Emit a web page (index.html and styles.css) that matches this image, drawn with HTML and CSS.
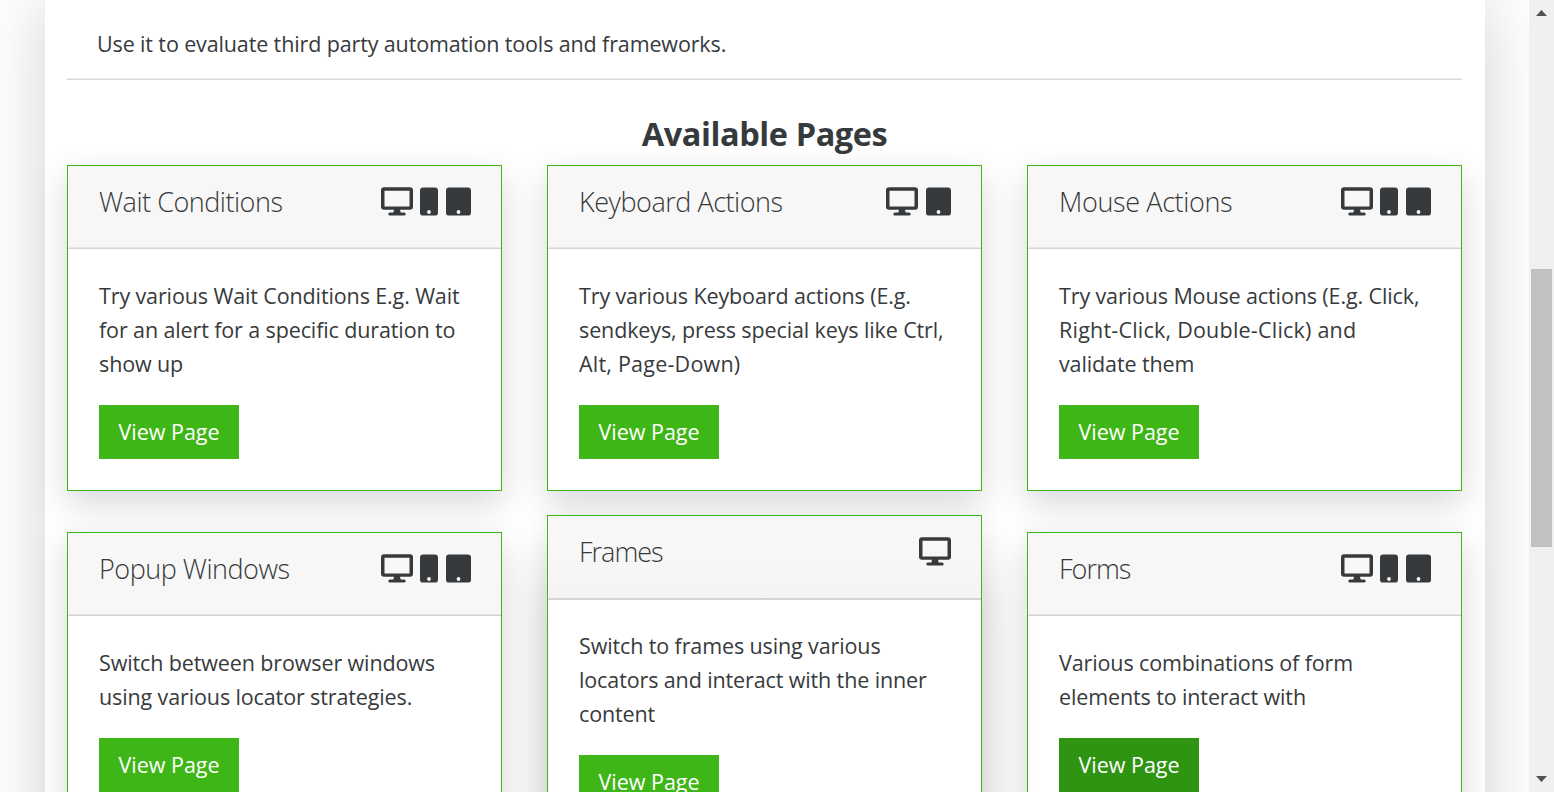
FILE: index.html
```
<!DOCTYPE html>
<html lang="en">
<head>
<meta charset="utf-8">
<title>Available Pages</title>
<link rel="stylesheet" href="styles.css">
</head>
<body>
<svg class="defs" width="0" height="0" aria-hidden="true">
  <symbol id="desktop" viewBox="0 0 32 29"><path fill-rule="evenodd" d="M3 .3H29Q32 .3 32 3.3V19.8Q32 22.8 29 22.8H19L19.7 25.6H23.1Q24.7 25.6 24.7 27.1T23.1 28.6H8.9Q7.3 28.6 7.3 27.1T8.9 25.6H12.3L13 22.8H3Q0 22.8 0 19.8V3.3Q0 .3 3 .3ZM3.5 3.8V19.4H28.5V3.8Z"/></symbol>
  <symbol id="mobile" viewBox="0 0 18 29"><path fill-rule="evenodd" d="M3.2 .4H14.8Q18 .4 18 3.6V25.4Q18 28.6 14.8 28.6H3.2Q0 28.6 0 25.4V3.6Q0 .4 3.2 .4ZM9 23.1A1.9 1.9 0 1 0 9 26.9A1.9 1.9 0 1 0 9 23.1Z"/></symbol>
  <symbol id="tablet" viewBox="0 0 25 29"><path fill-rule="evenodd" d="M3.2 .4H21.8Q25 .4 25 3.6V25.4Q25 28.6 21.8 28.6H3.2Q0 28.6 0 25.4V3.6Q0 .4 3.2 .4ZM12.5 23.1A1.9 1.9 0 1 0 12.5 26.9A1.9 1.9 0 1 0 12.5 23.1Z"/></symbol>
</svg>
<div class="viewport">
  <div class="scroll-area">
    <main class="page">
      <p class="intro">Use it to evaluate third party automation tools and frameworks.</p>
      <h2 class="heading">Available Pages</h2>
      <div class="cards">
        <article class="card">
          <header class="card-header"><h3>Wait Conditions</h3><span class="icons"><svg class="desktop"><use href="#desktop"/></svg><svg class="mobile"><use href="#mobile"/></svg><svg class="tablet"><use href="#tablet"/></svg></span></header>
          <div class="card-body"><p>Try various Wait Conditions E.g. Wait<br>for an alert for a specific duration to<br>show up</p><a class="button">View Page</a></div>
        </article>
        <article class="card">
          <header class="card-header"><h3>Keyboard Actions</h3><span class="icons"><svg class="desktop"><use href="#desktop"/></svg><svg class="tablet"><use href="#tablet"/></svg></span></header>
          <div class="card-body"><p>Try various Keyboard actions (E.g.<br>sendkeys, press special keys like Ctrl,<br><span class="loose">Alt, Page-Down)</span></p><a class="button">View Page</a></div>
        </article>
        <article class="card">
          <header class="card-header"><h3 class="t-mouse">Mouse Actions</h3><span class="icons"><svg class="desktop"><use href="#desktop"/></svg><svg class="mobile"><use href="#mobile"/></svg><svg class="tablet"><use href="#tablet"/></svg></span></header>
          <div class="card-body"><p>Try various Mouse actions (E.g. Click,<br><span class="loose">Right-Click, Double-Click) and</span><br>validate them</p><a class="button">View Page</a></div>
        </article>
        <article class="card">
          <header class="card-header"><h3>Popup Windows</h3><span class="icons"><svg class="desktop"><use href="#desktop"/></svg><svg class="mobile"><use href="#mobile"/></svg><svg class="tablet"><use href="#tablet"/></svg></span></header>
          <div class="card-body"><p>Switch between browser windows<br>using various locator strategies.</p><a class="button">View Page</a></div>
        </article>
        <article class="card raised">
          <header class="card-header"><h3 class="tight">Frames</h3><span class="icons"><svg class="desktop"><use href="#desktop"/></svg></span></header>
          <div class="card-body"><p>Switch to frames using various<br>locators and interact with the inner<br>content</p><a class="button">View Page</a></div>
        </article>
        <article class="card">
          <header class="card-header"><h3 class="tight">Forms</h3><span class="icons"><svg class="desktop"><use href="#desktop"/></svg><svg class="mobile"><use href="#mobile"/></svg><svg class="tablet"><use href="#tablet"/></svg></span></header>
          <div class="card-body"><p>Various combinations of form<br>elements to interact with</p><a class="button active">View Page</a></div>
        </article>
      </div>
    </main>
  </div>
  <div class="scrollbar">
    <svg class="arrow" viewBox="0 0 11 6"><path d="M5.5 0L11 6H0Z"/></svg>
    <div class="thumb"></div>
    <svg class="arrow" viewBox="0 0 11 6"><path d="M0 0H11L5.5 6Z"/></svg>
  </div>
</div>
</body>
</html>
```
FILE: styles.css
```
* { box-sizing: border-box; }
body { margin: 0; overflow: hidden; background: #fff; color: #373a3c; font: 21.5px/33.75px "Segoe UI", "Open Sans", "Noto Sans", sans-serif; }
h2, h3, p { margin: 0; white-space: nowrap; }
.defs { display: none; }
.viewport { display: flex; height: 792px; overflow: hidden; }
.scroll-area { width: 1529px; padding: 0 44px 0 45px; overflow: hidden; }
.page { height: 1000px; padding: 0 23px 0 22px; background: #fff; box-shadow: 0 0 67px rgba(0,0,0,.18); }
.intro { height: 80px; padding: 27px 30px 0; letter-spacing: -.13px; background: linear-gradient(#ededed, #ededed) 0 78px / 100% 1px no-repeat; border-bottom: 1px solid #d9d9d9; }
.heading { height: 85px; padding-top: 34px; text-align: center; font-size: 32.5px; line-height: 40px; font-weight: 700; letter-spacing: -.42px; }
.cards { display: grid; grid-template-columns: repeat(3, 435px); column-gap: 45px; row-gap: 41px; align-items: start; }
.card { min-height: 326px; background: #fff; border: 1px solid #3fb618; box-shadow: 0 12px 33px rgba(0,0,0,.16); }
.card-header { display: flex; justify-content: space-between; height: 83px; padding: 20px 30px 0; background: linear-gradient(#e6e6e6, #e6e6e6) 0 81px / 100% 1px no-repeat #f7f7f7; border-bottom: 1px solid #d3d3d3; border-left: 1px solid #fff; }
h3 { font-size: 27px; line-height: 31px; font-weight: 300; letter-spacing: -.48px; }
.t-mouse { letter-spacing: -.37px; }
.tight { letter-spacing: -1px; }
.icons { display: flex; height: 29px; margin-top: 1px; fill: #373a3c; }
.icons svg { height: 29px; }
.desktop { width: 32px; }
.mobile { width: 18px; margin-left: 7px; }
.tablet { width: 25px; margin-left: 8px; }
.card-body { padding: 30px 29px 31px 31px; }
.card-body p { margin-bottom: 24.75px; letter-spacing: -.12px; }
.card-body .loose { letter-spacing: .22px; }
.button { display: block; width: 140px; height: 54px; background: #3fb618; color: #fff; text-align: center; line-height: 54px; }
.button.active { background: #2f9412; }
.raised { transform: translateY(-17px); box-shadow: 0 12px 33px rgba(0,0,0,.13), 0 58px 50px rgba(0,0,0,.16); }
.raised .card-header { height: 84px; background: linear-gradient(#f7f7f7 60%, #f3f3f3); border-bottom: 2px solid #d3d3d3; }
.raised .card-body { padding-top: 29px; }
.scrollbar { width: 25px; height: 792px; display: flex; flex-direction: column; align-items: center; padding: 10px 0 10px; background: #f0f0f0; }
.arrow { width: 11px; height: 6px; fill: #505050; }
.thumb { width: 21px; height: 278px; margin: 253px 1px auto 0; background: #c1c1c1; }
```
